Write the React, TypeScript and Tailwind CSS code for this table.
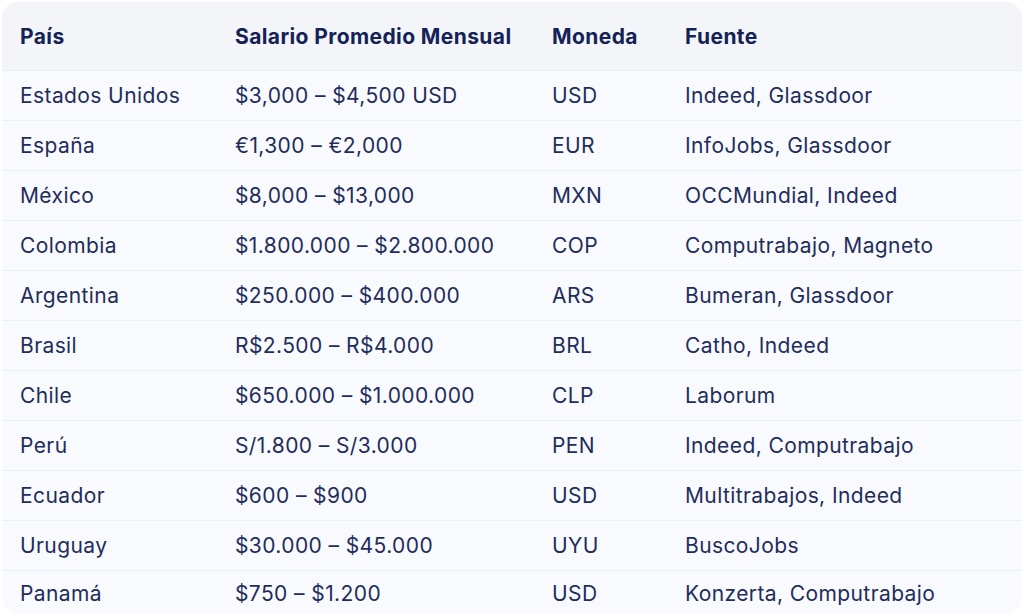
import React from "react";

const rows: [string, string, string, string][] = [
  ["Estados Unidos", "$3,000 – $4,500 USD", "USD", "Indeed, Glassdoor"],
  ["España", "€1,300 – €2,000", "EUR", "InfoJobs, Glassdoor"],
  ["México", "$8,000 – $13,000", "MXN", "OCCMundial, Indeed"],
  ["Colombia", "$1.800.000 – $2.800.000", "COP", "Computrabajo, Magneto"],
  ["Argentina", "$250.000 – $400.000", "ARS", "Bumeran, Glassdoor"],
  ["Brasil", "R$2.500 – R$4.000", "BRL", "Catho, Indeed"],
  ["Chile", "$650.000 – $1.000.000", "CLP", "Laborum"],
  ["Perú", "S/1.800 – S/3.000", "PEN", "Indeed, Computrabajo"],
  ["Ecuador", "$600 – $900", "USD", "Multitrabajos, Indeed"],
  ["Uruguay", "$30.000 – $45.000", "UYU", "BuscoJobs"],
  ["Panamá", "$750 – $1.200", "USD", "Konzerta, Computrabajo"],
];

export default function App() {
  return (
    <div className="w-[1024px] h-[616px] bg-white p-[2px]" style={{ fontFamily: "Inter, 'Noto Sans', sans-serif" }}>
      <div className="h-[612px] rounded-[16px] overflow-hidden bg-[#f8fafd]">
        <table className="w-full border-collapse text-[21px] tracking-[0.4px] text-[#1f2d5c]">
          <colgroup>
            <col className="w-[215px]" />
            <col className="w-[317px]" />
            <col className="w-[133px]" />
            <col />
          </colgroup>
          <thead>
            <tr className="h-[68px] bg-[#f3f5f9] text-[#142257]">
              <th className="text-left pl-[18px] pt-[2px] font-bold">País</th>
              <th className="text-left pl-[18px] pt-[2px] font-bold">Salario Promedio Mensual</th>
              <th className="text-left pl-[18px] pt-[2px] font-bold">Moneda</th>
              <th className="text-left pl-[18px] pt-[2px] font-bold">Fuente</th>
            </tr>
          </thead>
          <tbody>
            {rows.map((r, i) => (
              <tr key={i} className={`border-t border-[#e9effa] ${i === rows.length - 1 ? "h-[44px]" : "h-[50px]"}`}>
                {r.map((c, j) => (
                  <td key={j} className="pl-[18px] pt-[2px] whitespace-nowrap font-normal">{c}</td>
                ))}
              </tr>
            ))}
          </tbody>
        </table>
      </div>
    </div>
  );
}
